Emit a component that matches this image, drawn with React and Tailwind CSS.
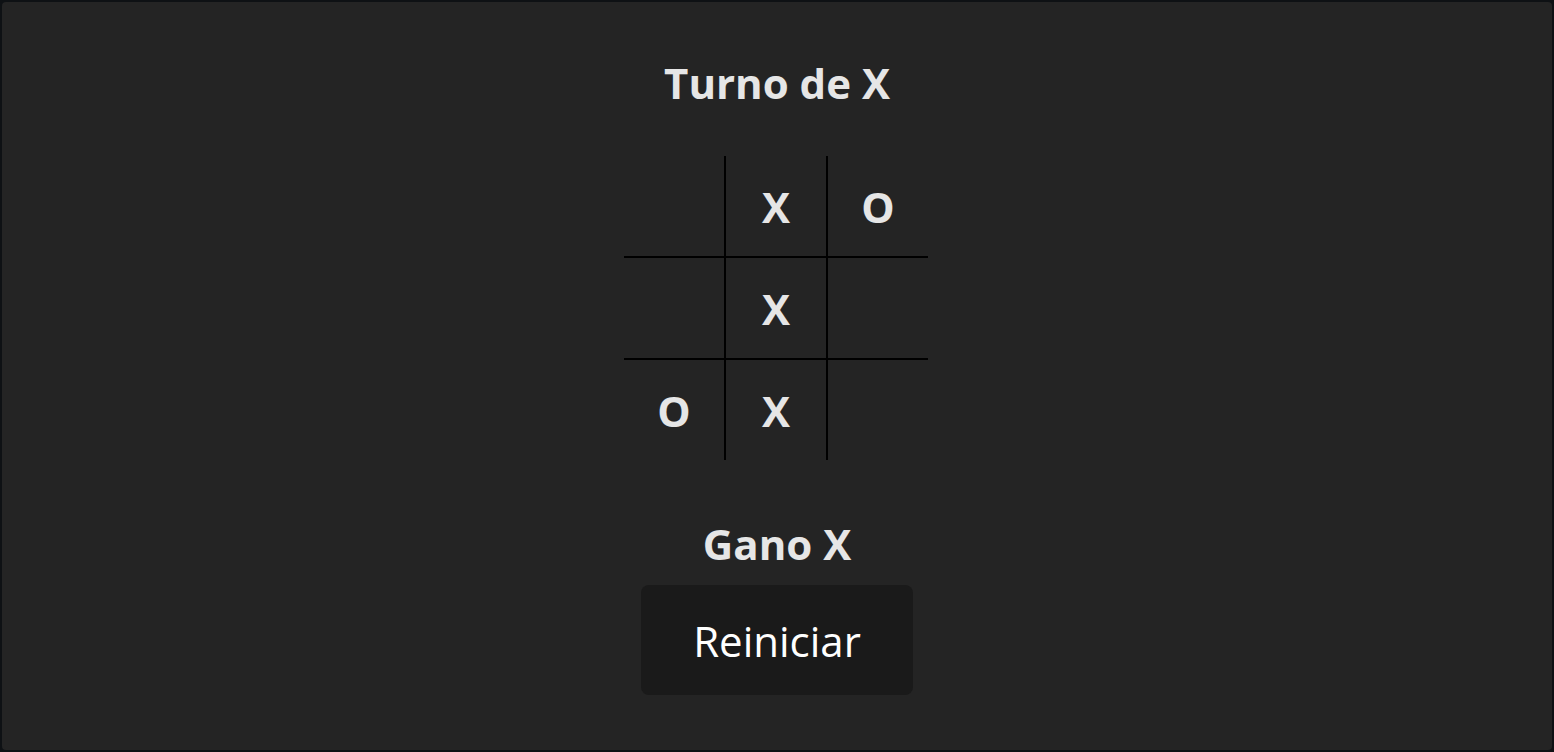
const board = ['', 'X', 'O', '', 'X', '', 'O', 'X', '']

export default function App() {
  return (
    <div className="h-[752px] w-full bg-[#0e1114] p-[2px]" style={{ fontFamily: '"Open Sans", "Noto Sans", sans-serif' }}>
      <div className="flex h-full flex-col items-center rounded-[4px] bg-[#242424] text-[#e6e6e6]">
        <h1 className="mt-[50px] flex h-[60px] items-center text-[42px] font-bold">Turno de X</h1>

        <div className="mt-[44px] grid grid-cols-3">
          {board.map((v, i) => (
            <div
              key={i}
              className={
                'box-border flex items-center justify-center text-[42px] font-bold border-black ' +
                (i % 3 < 2 ? 'w-[102px] border-r-2 ' : 'w-[100px] ') +
                (i < 6 ? 'h-[102px] border-b-2' : 'h-[100px]')
              }
            >
              {v}
            </div>
          ))}
        </div>

        <h2 className="mt-[58px] flex h-[50px] items-center text-[42px] font-bold">Gano X</h2>

        <button className="mt-[17px] h-[110px] w-[272px] rounded-[8px] bg-[#1a1a1a] text-[42px] font-medium text-white">
          Reiniciar
        </button>
      </div>
    </div>
  )
}
